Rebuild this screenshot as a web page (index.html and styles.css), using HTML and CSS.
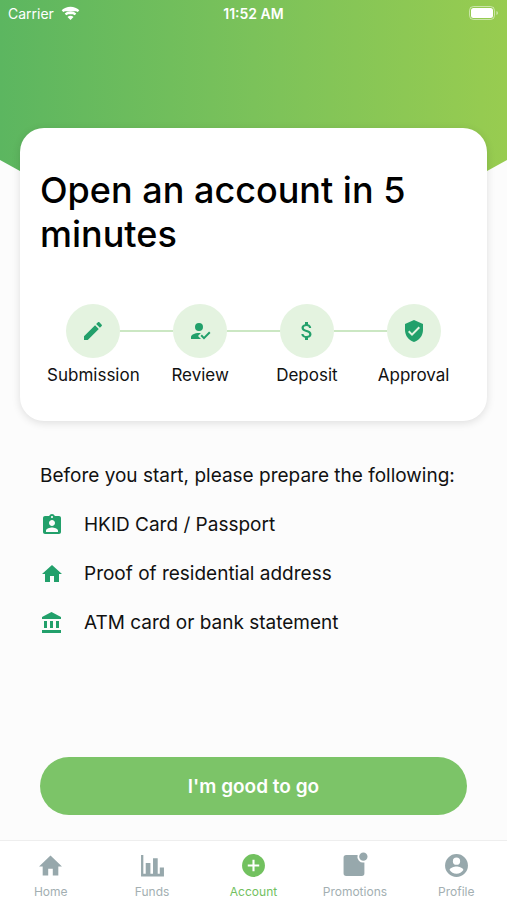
FILE: index.html
```html
<!DOCTYPE html>
<html lang="en">
    <head>
        <meta charset="utf-8">
        <meta name="viewport" content="width=device-width, initial-scale=1">
        <title>Open an account</title>
        <link rel="stylesheet" href="styles.css">
    </head>
    <body>
        <header class="hero">
            <div class="status-bar">
                <div class="carrier">
                    <span>Carrier</span>
                    <svg class="wifi" viewBox="0 0 18 14" fill="none" stroke="#fff" stroke-width="2.4">
                        <path d="M1 5.2C5.4.9 12.6.9 17 5.2"/>
                        <path d="M4 8.3c2.8-2.6 7.2-2.6 10 0"/>
                        <path d="M9 14l-3-3.1c1.7-1.5 4.3-1.5 6 0z" fill="#fff" stroke="none"/>
                    </svg>
                </div>
                <span class="time">11:52 AM</span>
                <svg class="battery" viewBox="0 0 30 14">
                    <rect x="0.5" y="0.5" width="25" height="13" rx="4" fill="none" stroke="#fff" stroke-opacity="0.5"/>
                    <rect x="2" y="2" width="22" height="10" rx="2.5" fill="#fff"/>
                    <path d="M27.5 5v4c1.8-.6 1.8-3.4 0-4z" fill="#fff" fill-opacity="0.6"/>
                </svg>
            </div>
        </header>

        <main>
            <section class="card">
                <h1>Open an account in 5 minutes</h1>
                <ol class="steps">
                    <li>
                        <div class="step-mark">
                            <span class="step-icon">
                                <svg viewBox="0 0 24 24"><path d="M3 17.250V21h3.750L17.810 9.940l-3.750-3.750L3 17.250zM20.710 7.040c.39-.39.39-1.020 0-1.410l-2.340-2.340c-.39-.39-1.020-.39-1.410 0l-1.830 1.830 3.750 3.750 1.830-1.830z"/></svg>
                            </span>
                        </div>
                        <span>Submission</span>
                    </li>
                    <li>
                        <div class="step-mark">
                            <span class="step-icon">
                                <svg viewBox="0 0 24 24"><path d="M21.100 12.500l1.400 1.410-6.530 6.590L12.500 17l1.400-1.410 2.070 2.080 5.130-5.170M10 17l3 3H3v-2c0-2.210 3.580-4 8-4l1.890.11L10 17m1-13a4 4 0 0 1 4 4 4 4 0 0 1-4 4 4 4 0 0 1-4-4 4 4 0 0 1 4-4z"/></svg>
                            </span>
                        </div>
                        <span>Review</span>
                    </li>
                    <li>
                        <div class="step-mark">
                            <span class="step-icon">
                                <svg viewBox="0 0 24 24"><path d="M11.800 10.900c-2.270-.59-3-1.200-3-2.150 0-1.090 1.010-1.850 2.700-1.850 1.780 0 2.440.85 2.500 2.100h2.210c-.07-1.720-1.120-3.300-3.210-3.810V3h-3v2.160c-1.940.42-3.500 1.680-3.500 3.610 0 2.310 1.910 3.460 4.700 4.130 2.500.6 3 1.480 3 2.410 0 .69-.49 1.790-2.700 1.790-2.060 0-2.870-.92-2.980-2.100h-2.200c.12 2.190 1.760 3.420 3.680 3.830V21h3v-2.150c1.950-.37 3.500-1.500 3.500-3.550 0-2.840-2.430-3.810-4.700-4.400z"/></svg>
                            </span>
                        </div>
                        <span>Deposit</span>
                    </li>
                    <li>
                        <div class="step-mark">
                            <span class="step-icon">
                                <svg viewBox="0 0 24 24"><path d="M12 1L3 5v6c0 5.550 3.840 10.740 9 12 5.160-1.260 9-6.450 9-12V5l-9-4zm-2 16l-4-4 1.410-1.410L10 14.170l6.590-6.590L18 9l-8 8z"/></svg>
                            </span>
                        </div>
                        <span>Approval</span>
                    </li>
                </ol>
            </section>

            <section class="prepare">
                <p>Before you start, please prepare the following:</p>
                <ul>
                    <li>
                        <svg viewBox="0 0 24 24"><path d="M19 3h-4.180C14.400 1.840 13.300 1 12 1c-1.300 0-2.400.84-2.820 2H5c-1.100 0-2 .9-2 2v14c0 1.100.9 2 2 2h14c1.100 0 2-.9 2-2V5c0-1.100-.9-2-2-2zm-7 0c.55 0 1 .45 1 1s-.45 1-1 1-1-.45-1-1 .45-1 1-1zm0 4c1.660 0 3 1.340 3 3s-1.340 3-3 3-3-1.340-3-3 1.340-3 3-3zm6 12H6v-1.400c0-2 4-3.100 6-3.100s6 1.100 6 3.100V19z"/></svg>
                        HKID Card / Passport
                    </li>
                    <li>
                        <svg viewBox="0 0 24 24"><path d="M10 20v-6h4v6h5v-8h3L12 3 2 12h3v8z"/></svg>
                        Proof of residential address
                    </li>
                    <li>
                        <svg viewBox="0 0 24 24"><path d="M4 10v7h3v-7H4zm6 0v7h3v-7h-3zM2 22h19v-3H2v3zm14-12v7h3v-7h-3zM11.500 1L2 6v2h19V6l-9.500-5z"/></svg>
                        ATM card or bank statement
                    </li>
                </ul>
            </section>

            <button type="button" class="start-btn">I'm good to go</button>
        </main>

        <nav class="tabs">
            <a href="#home">
                <svg viewBox="0 0 24 24"><path d="M9.800 21.500v-6.500h4.400v6.500h5.300V13H23L12 2.500 1 13h3.500v8.500z"/></svg>
                Home
            </a>
            <a href="#funds">
                <svg viewBox="0 0 24 24"><path d="M1 2h2.200v18H23v2.500H1zM5.500 9.500h4.500V20H5.500zM12.500 5H17v15h-4.500zM19 14h4v6h-4z"/></svg>
                Funds
            </a>
            <a href="#account" class="active">
                <svg viewBox="0 0 24 24"><path d="M12 1a11 11 0 1 0 0 22 11 11 0 0 0 0-22zm5.500 12H13v4.500h-2V13H6.500v-2H11V6.500h2V11h4.500v2z"/></svg>
                Account
            </a>
            <a href="#promotions">
                <svg viewBox="0 0 24 24"><path d="M15 2H4a2.500 2.500 0 0 0-2.500 2.500v15A2.500 2.500 0 0 0 4 22h15a2.500 2.500 0 0 0 2.500-2.500V9A5.500 5.500 0 0 1 15 2z"/><circle cx="20.500" cy="3.500" r="4"/></svg>
                Promotions
            </a>
            <a href="#profile">
                <svg viewBox="0 0 24 24"><path d="M12 1a11 11 0 1 0 0 22 11 11 0 0 0 0-22zm0 3.300a3.500 3.500 0 1 1 0 7 3.500 3.500 0 0 1 0-7zm0 15.600c-2.800 0-5.200-1.400-6.600-3.500.03-2.200 4.400-3.400 6.600-3.400s6.570 1.200 6.600 3.400A7.900 7.900 0 0 1 12 19.900z"/></svg>
                Profile
            </a>
        </nav>
    </body>
</html>
```

FILE: styles.css
```css
* {
    box-sizing: border-box;
}

body {
    margin: 0;
    min-height: 100vh;
    display: flex;
    flex-direction: column;
    background-color: #fcfcfc;
    color: #111;
    font-family: Inter, "Liberation Sans", sans-serif;
}

h1, p, ul, ol {
    margin: 0;
    padding: 0;
    font-weight: normal;
}

ul, ol {
    list-style: none;
}

svg {
    display: block;
    fill: currentColor;
}

/* green header with the pointed bottom edge */
.hero {
    height: 300px;
    background: linear-gradient(to right, #5cb660, #7bc25a 50%, #98cc50);
    clip-path: polygon(0 0, 100% 0, 100% 160px, 50% 100%, 0 160px);
    color: white;
}

.status-bar {
    display: grid;
    grid-template-columns: 1fr auto 1fr;
    align-items: center;
    height: 26px;
    padding: 0 8px;
    font-size: 14px;
}

.carrier {
    display: flex;
    align-items: center;
    gap: 7px;
}

.wifi {
    width: 19px;
    height: 14px;
}

.time {
    font-weight: 600;
}

.battery {
    justify-self: end;
    width: 30px;
    height: 14px;
}

main {
    flex: 1;
    display: flex;
    flex-direction: column;
    margin-top: -172px;
    padding: 0 20px 25px;
    position: relative;
}

.card {
    padding: 40px 20px 34px;
    border-radius: 24px;
    background-color: white;
    box-shadow: 0 2px 8px rgba(0, 0, 0, 0.12);
}

h1 {
    color: black;
    font-size: 36px;
    font-weight: 500;
    line-height: 44px;
}

.steps {
    display: grid;
    grid-template-columns: repeat(4, 1fr);
    margin-top: 48px;
    font-size: 17px;
    line-height: 24px;
    text-align: center;
}

.step-mark {
    display: flex;
    align-items: center;
    margin-bottom: 5px;
}

.step-mark::before,
.step-mark::after {
    content: "";
    flex: 1;
    height: 2px;
    background-color: #cbe7c3;
}

.steps li:first-child .step-mark::before,
.steps li:last-child .step-mark::after {
    background-color: transparent;
}

.step-icon {
    display: flex;
    align-items: center;
    justify-content: center;
    width: 54px;
    height: 54px;
    border-radius: 50%;
    background-color: #e4f3e0;
    color: #22a06b;
}

.step-icon svg {
    width: 24px;
    height: 24px;
}

.prepare {
    padding: 42px 20px;
    font-size: 19px;
    line-height: 25px;
}

.prepare li {
    display: flex;
    align-items: center;
    gap: 20px;
    margin-top: 24px;
}

.prepare svg {
    width: 24px;
    height: 24px;
    color: #22a06b;
}

.start-btn {
    height: 58px;
    margin: auto 20px 0;
    border: none;
    border-radius: 29px;
    background-color: #7cc468;
    color: white;
    font-family: inherit;
    font-size: 19px;
    font-weight: 600;
    cursor: pointer;
}

.tabs {
    display: grid;
    grid-template-columns: repeat(5, 1fr);
    height: 60px;
    padding-top: 12px;
    border-top: 1px solid #eee;
    background-color: white;
}

.tabs a {
    display: flex;
    flex-direction: column;
    align-items: center;
    gap: 6px;
    color: #a3afb2;
    font-size: 12px;
    line-height: 16px;
    text-decoration: none;
}

.tabs svg {
    width: 25px;
    height: 25px;
    overflow: visible;
    color: #97a8ac;
}

.tabs .active,
.tabs .active svg {
    color: #72c15f;
}
```
